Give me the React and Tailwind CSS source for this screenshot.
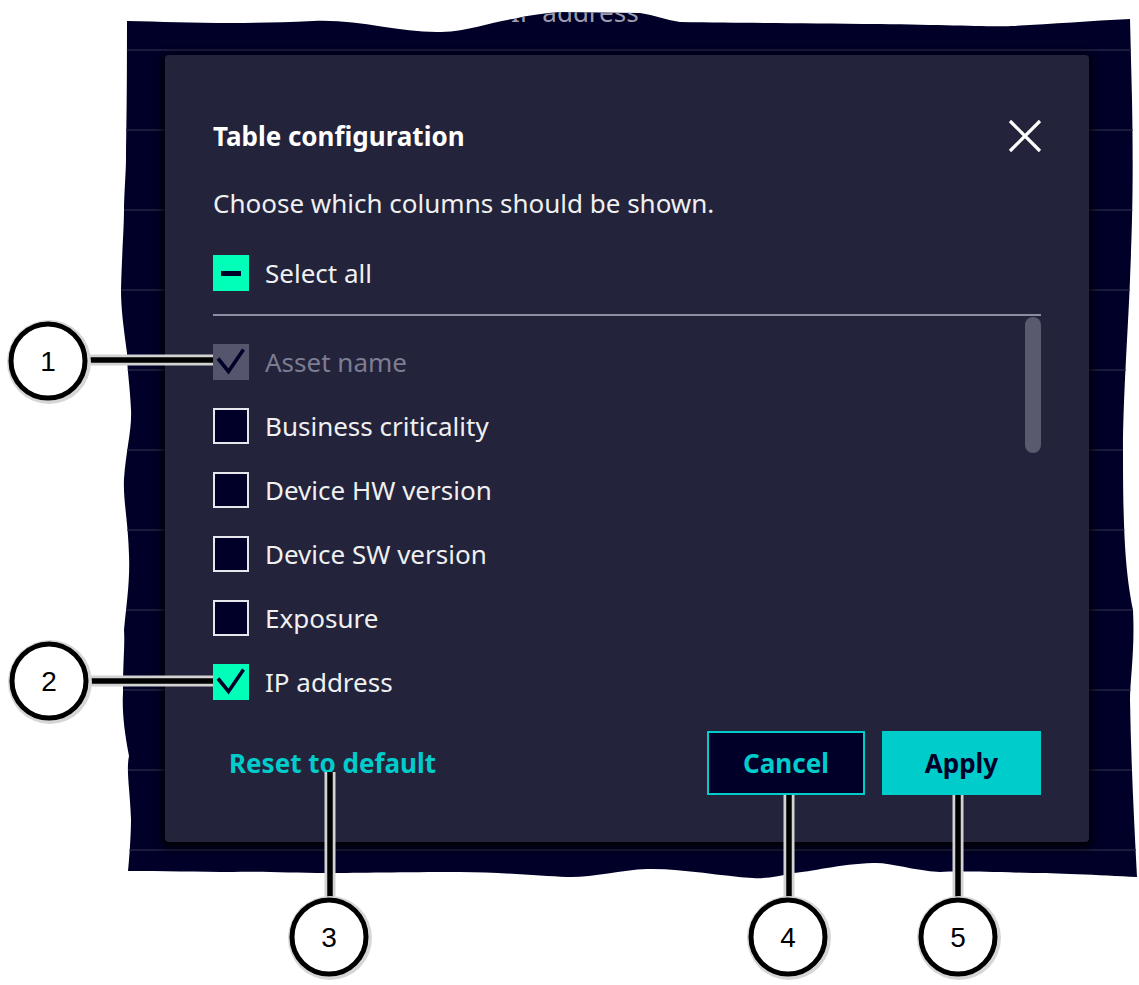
import React from "react";

const TORN =
  "M127,21 C180,22 230,25 313,21 C360,19 400,33 441,32 C470,31 490,22 513,19 C530,15 545,13 560,12 L640,13 C655,15 665,20 680,22 C750,23 800,23 880,24 C950,25 1000,27 1013,26 C1050,24 1090,21 1130,19 L1132,100 C1134,200 1131,250 1130,280 C1128,330 1123,400 1123,450 C1123,530 1125,570 1133,610 C1135,650 1130,680 1130,700 C1131,760 1134,820 1137,877 C1100,875 1050,873 1033,873 C990,872 960,871 940,872 C910,870 890,862 873,863 C840,864 810,872 793,873 C780,876 765,879 753,878 C720,876 680,868 647,869 C620,870 590,878 567,877 C540,876 500,872 460,872 C400,872 360,873 327,873 C290,873 260,871 233,872 C200,872 160,871 128,871 C130,850 131,830 131,819 C130,790 126,770 129,756 C124,730 122,710 123,693 C123,660 125,645 124,630 C127,600 130,580 129,555 C128,520 123,500 124,479 C126,450 132,430 131,410 C130,385 127,370 127,353 C124,330 121,310 121,290 C122,250 124,230 124,208 C125,180 126,170 126,158 C127,100 127,60 127,21 Z";

const gridYs = [50, 130, 210, 290, 370, 450, 530, 610, 690, 770, 850];

function Background() {
  return (
    <svg className="absolute inset-0" width="1139" height="985" viewBox="0 0 1139 985">
      <defs>
        <clipPath id="torn">
          <path d={TORN} />
        </clipPath>
      </defs>
      <path d={TORN} fill="#000028" />
      <g clipPath="url(#torn)">
        {gridYs.map((y) => (
          <line key={y} x1="100" x2="1139" y1={y} y2={y} stroke="#1b1b3b" strokeWidth="2" />
        ))}
        <text x="511" y="22" fontSize="26" fill="#9d9daf" fontFamily="'Noto Sans', sans-serif">
          IP address
        </text>
      </g>
    </svg>
  );
}

function Check({ color = "#000028" }) {
  return (
    <svg width="36" height="36" viewBox="0 0 36 36" className="block">
      <path d="M5 14.5 L15.5 27.5 L30.5 5.5" fill="none" stroke={color} strokeWidth="3.6" strokeLinecap="butt" strokeLinejoin="miter" />
    </svg>
  );
}

function Row({ label, state }) {
  let box;
  if (state === "checked") {
    box = (
      <div className="w-[36px] h-[36px] bg-[#00ffb9] shrink-0">
        <Check />
      </div>
    );
  } else if (state === "disabled") {
    box = (
      <div className="w-[36px] h-[36px] bg-[#55556d] shrink-0">
        <Check />
      </div>
    );
  } else if (state === "indeterminate") {
    box = (
      <div className="w-[36px] h-[36px] bg-[#00ffb9] shrink-0 flex items-center justify-center">
        <div className="w-[20px] h-[5px] bg-[#000028]" />
      </div>
    );
  } else {
    box = <div className="w-[36px] h-[36px] border-2 border-[#e6e6ec] bg-[#000028] shrink-0" />;
  }
  return (
    <div className="flex items-center gap-[16px] h-[64px]">
      {box}
      <span
        className={
          "text-[26px] leading-none " + (state === "disabled" ? "text-[#7d7d92]" : "text-[#f0f0f0]")
        }
      >
        {label}
      </span>
    </div>
  );
}

function Callouts() {
  const lines = [
    [80, 360, 213, 360],
    [80, 681, 213, 681],
    [330, 772, 330, 900],
    [789, 795, 789, 900],
    [958, 795, 958, 900],
  ];
  const circles = [
    [48, 361, "1"],
    [49, 681, "2"],
    [329, 937, "3"],
    [788, 937, "4"],
    [958, 937, "5"],
  ];
  return (
    <svg className="absolute inset-0 pointer-events-none" width="1139" height="985" viewBox="0 0 1139 985">
      {lines.map(([x1, y1, x2, y2], i) => (
        <g key={i}>
          <line x1={x1} y1={y1} x2={x2} y2={y2} stroke="#d2d2d2" strokeWidth="11" />
          <line x1={x1} y1={y1} x2={x2} y2={y2} stroke="#000000" strokeWidth="5.5" />
        </g>
      ))}
      {circles.map(([cx, cy, n]) => (
        <g key={n}>
          <circle cx={cx + 1} cy={cy + 1} r="42" fill="#d6d6d6" />
          <circle cx={cx} cy={cy} r="37" fill="#ffffff" stroke="#000000" strokeWidth="5" />
          <text
            x={cx}
            y={cy + 10}
            textAnchor="middle"
            fontSize="28"
            fill="#000000"
            fontFamily="'Liberation Sans', Arial, sans-serif"
          >
            {n}
          </text>
        </g>
      ))}
    </svg>
  );
}

export default function App() {
  return (
    <div className="relative w-[1139px] h-[985px] bg-white overflow-hidden font-['Noto_Sans',sans-serif]">
      <Background />
      <div className="relative pl-[165px] pt-[55px]">
        <div className="w-[924px] h-[787px] bg-[#23233c] rounded-[4px] shadow-[0_3px_8px_3px_rgba(0,0,0,0.85)] flex flex-col px-[48px] pt-[57px] pb-[47px]">
          <div className="flex items-center justify-between h-[48px]">
            <h2 className="text-[26px] font-bold text-white leading-none">Table configuration</h2>
            <svg width="34" height="34" viewBox="0 0 34 34" className="mr-[-1px]">
              <path d="M2 2 L32 32 M32 2 L2 32" stroke="#ffffff" strokeWidth="3.2" fill="none" />
            </svg>
          </div>
          <p className="mt-[25px] h-[36px] flex items-center text-[26px] text-[#f0f0f0] leading-none">
            Choose which columns should be shown.
          </p>
          <div className="mt-[28px] h-[48px] flex items-center">
            <Row label="Select all" state="indeterminate" />
          </div>
          <div className="mt-[17px] h-[2px] bg-[#8c8ca2]" />
          <div className="flex items-start">
            <div className="flex-1 flex flex-col pt-[14px]">
              <Row label="Asset name" state="disabled" />
              <Row label="Business criticality" />
              <Row label="Device HW version" />
              <Row label="Device SW version" />
              <Row label="Exposure" />
              <Row label="IP address" state="checked" />
            </div>
            <div className="w-[16px] h-[136px] mt-[1px] rounded-full bg-[#5a5a6e]" />
          </div>
          <div className="mt-[17px] h-[64px] flex items-center">
            <button className="h-[64px] px-[16px] text-[26px] font-bold text-[#00cccc] leading-none">
              Reset to default
            </button>
            <div className="flex-1" />
            <button className="w-[158px] h-[64px] border-2 border-[#00cccc] bg-[#000028] text-[26px] font-bold text-[#00cccc] leading-none">
              Cancel
            </button>
            <button className="ml-[17px] w-[159px] h-[64px] bg-[#00cccc] text-[26px] font-bold text-[#000028] leading-none">
              Apply
            </button>
          </div>
        </div>
      </div>
      <Callouts />
    </div>
  );
}
